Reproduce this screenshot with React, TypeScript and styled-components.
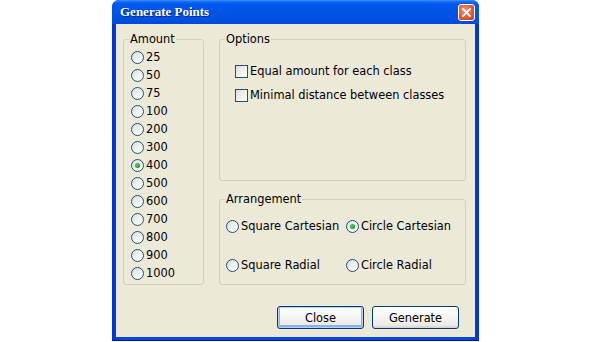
import React from "react";
import styled, { createGlobalStyle } from "styled-components";

const Global = createGlobalStyle`
  html, body { margin: 0; padding: 0; background: #ffffff; }
  body { font-family: "DejaVu Sans", Verdana, sans-serif; font-size: 11.4px; color: #000; }
`;

const Window = styled.div`
  margin-left: 112px;
  width: 367px;
  height: 341px;
  display: flex;
  flex-direction: column;
  background: linear-gradient(90deg, #0032D3 0%, #0847DC 2%, #0847DC 98%, #0032D3 100%);
  border-radius: 7px 7px 0 0;
  overflow: hidden;
  box-sizing: border-box;
  border-bottom: 1px solid #001A8C;
`;

const TitleBar = styled.div`
  height: 24px;
  flex: none;
  display: flex;
  align-items: center;
  justify-content: space-between;
  padding: 0 4px 0 8px;
  background: linear-gradient(180deg, #3D95FF 0%, #1368F4 8%, #0058EE 18%, #0054E3 55%, #0050E0 85%, #0048D8 100%);
`;

const Title = styled.span`
  font-family: "Liberation Serif", "Times New Roman", serif;
  font-weight: bold;
  font-size: 13px;
  color: #ffffff;
  text-shadow: 1px 1px 0 #0A1E8C;
`;

const CloseBox = styled.div`
  width: 15px;
  height: 15px;
  border: 1px solid #ffffff;
  border-radius: 3px;
  background: radial-gradient(circle at 40% 35%, #F0957A 0%, #E05A35 55%, #C4401F 100%);
  display: flex;
  align-items: center;
  justify-content: center;
  margin-top: 1px;
`;

const Body = styled.div`
  flex: 1;
  margin: 0 4px 3px 4px;
  background: #ECE9D8;
  display: flex;
  flex-direction: column;
  padding: 8px 9px 8px 7px;
  box-sizing: border-box;
`;

const Content = styled.div`
  flex: 1;
  display: flex;
  gap: 15px;
`;

const Group = styled.fieldset<{ $w?: number; $h?: number; $grow?: boolean }>`
  margin: 0;
  padding: 0;
  border: 1px solid #D0D0BF;
  border-radius: 3px;
  box-sizing: border-box;
  ${(p) => (p.$w ? `width: ${p.$w}px;` : "")}
  ${(p) => (p.$h ? `height: ${p.$h}px;` : "")}
  ${(p) => (p.$grow ? "flex: 1;" : "")}
  min-width: 0;
`;

const Legend = styled.legend`
  padding: 0 1px;
  margin-left: 5px;
  line-height: 14px;
  color: #000;
`;

const AmountList = styled.div`
  display: flex;
  flex-direction: column;
  padding: 2px 0 0 7px;
`;

const RightCol = styled.div`
  width: 247px;
  display: flex;
  flex-direction: column;
  gap: 11px;
`;

const OptionList = styled.div`
  display: flex;
  flex-direction: column;
  padding: 13px 0 0 15px;
`;

const ArrGrid = styled.div`
  display: grid;
  grid-template-columns: 120px 1fr;
  row-gap: 19px;
  padding: 10px 0 0 6px;
`;

const Row = styled.label<{ $h: number }>`
  display: flex;
  align-items: center;
  height: ${(p) => p.$h}px;
  gap: 2px;
  white-space: nowrap;
`;

const RadioCircle = styled.span<{ $on?: boolean }>`
  width: 11px;
  height: 11px;
  flex: none;
  border: 1px solid #1C5180;
  border-radius: 50%;
  background: linear-gradient(135deg, #DCDCD7 0%, #EEEEEA 45%, #FFFFFF 100%);
  display: flex;
  align-items: center;
  justify-content: center;
  &::after {
    content: "";
    display: ${(p) => (p.$on ? "block" : "none")};
    width: 5px;
    height: 5px;
    border-radius: 50%;
    background: radial-gradient(circle at 40% 40%, #5BD45B 0%, #21A121 60%, #1A8A1A 100%);
  }
`;

const CheckSquare = styled.span`
  width: 11px;
  height: 11px;
  flex: none;
  border: 1px solid #1C5180;
  background: linear-gradient(135deg, #DCDCD7 0%, #EEEEEA 45%, #FFFFFF 100%);
`;

const Buttons = styled.div`
  display: flex;
  justify-content: flex-end;
  gap: 8px;
  margin-top: 21px;
  padding-right: 7px;
`;

const Button = styled.button<{ $default?: boolean }>`
  width: 87px;
  height: 23px;
  border: 1px solid #003C74;
  border-radius: 3px;
  background: linear-gradient(180deg, #FFFFFF 0%, #F4F4F0 50%, #ECEBE6 85%, #D6D0C5 100%);
  font-family: "DejaVu Sans", Verdana, sans-serif;
  font-size: 11.4px;
  color: #000;
  padding: 0;
  box-shadow: ${(p) =>
    p.$default ? "inset 0 0 0 1px #B7D0F2, inset 0 -1px 0 2px #8AB0EE" : "none"};
`;

const amounts = ["25", "50", "75", "100", "200", "300", "400", "500", "600", "700", "800", "900", "1000"];

export default function App() {
  return (
    <>
      <Global />
      <Window>
        <TitleBar>
          <Title>Generate Points</Title>
          <CloseBox>
            <svg width="9" height="9" viewBox="0 0 9 9">
              <path d="M1 1 L8 8 M8 1 L1 8" stroke="#fff" strokeWidth="1.8" strokeLinecap="square" />
            </svg>
          </CloseBox>
        </TitleBar>
        <Body>
          <Content>
            <Group $w={81}>
              <Legend>Amount</Legend>
              <AmountList>
                {amounts.map((a) => (
                  <Row key={a} $h={18}>
                    <RadioCircle $on={a === "400"} />
                    {a}
                  </Row>
                ))}
              </AmountList>
            </Group>
            <RightCol>
              <Group $h={149}>
                <Legend>Options</Legend>
                <OptionList>
                  <Row $h={24}>
                    <CheckSquare />
                    Equal amount for each class
                  </Row>
                  <Row $h={24}>
                    <CheckSquare />
                    Minimal distance between classes
                  </Row>
                </OptionList>
              </Group>
              <Group $grow>
                <Legend>Arrangement</Legend>
                <ArrGrid>
                  <Row $h={20}>
                    <RadioCircle />
                    Square Cartesian
                  </Row>
                  <Row $h={20}>
                    <RadioCircle $on />
                    Circle Cartesian
                  </Row>
                  <Row $h={20}>
                    <RadioCircle />
                    Square Radial
                  </Row>
                  <Row $h={20}>
                    <RadioCircle />
                    Circle Radial
                  </Row>
                </ArrGrid>
              </Group>
            </RightCol>
          </Content>
          <Buttons>
            <Button $default>Close</Button>
            <Button>Generate</Button>
          </Buttons>
        </Body>
      </Window>
    </>
  );
}
